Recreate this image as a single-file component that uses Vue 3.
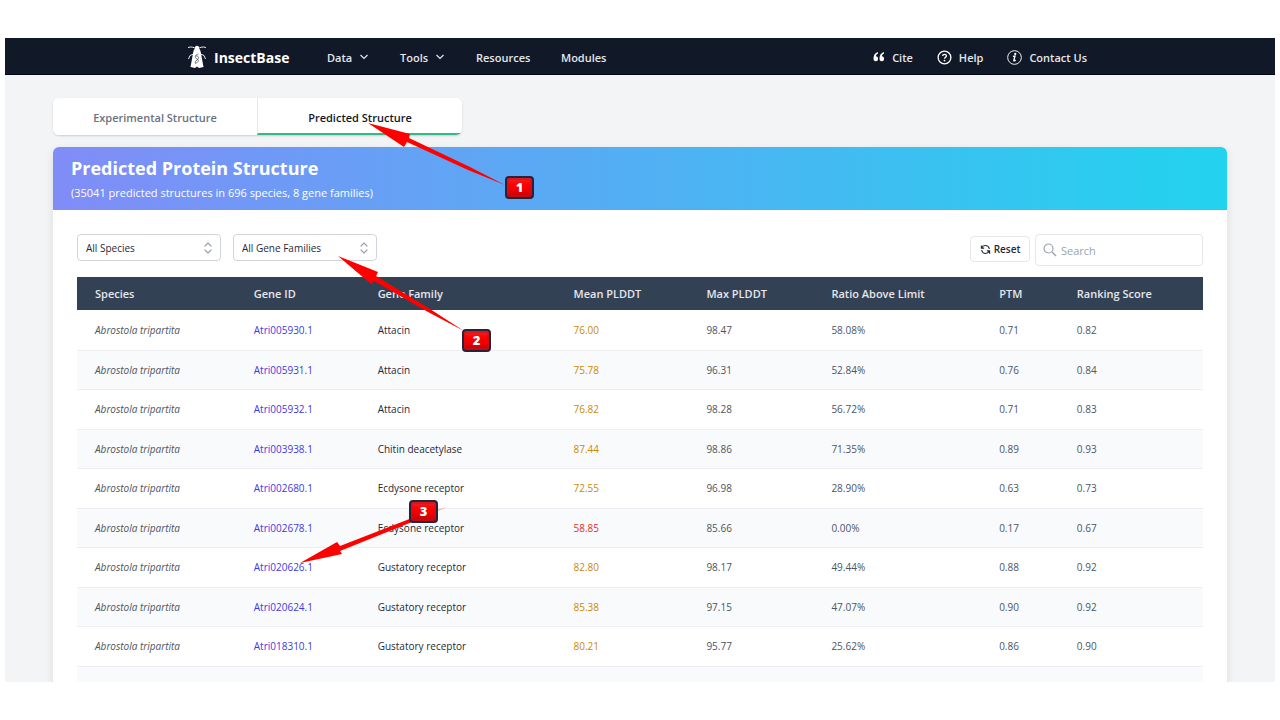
<script setup>
import { ref } from 'vue'

const species = ref('All Species')
const family = ref('All Gene Families')
const query = ref('')

const columns = ['Species', 'Gene ID', 'Gene Family', 'Mean PLDDT', 'Max PLDDT', 'Ratio Above Limit', 'PTM', 'Ranking Score']

const rows = [
  ['Atri005930.1', 'Attacin', '76.00', '98.47', '58.08%', '0.71', '0.82'],
  ['Atri005931.1', 'Attacin', '75.78', '96.31', '52.84%', '0.76', '0.84'],
  ['Atri005932.1', 'Attacin', '76.82', '98.28', '56.72%', '0.71', '0.83'],
  ['Atri003938.1', 'Chitin deacetylase', '87.44', '98.86', '71.35%', '0.89', '0.93'],
  ['Atri002680.1', 'Ecdysone receptor', '72.55', '96.98', '28.90%', '0.63', '0.73'],
  ['Atri002678.1', 'Ecdysone receptor', '58.85', '85.66', '0.00%', '0.17', '0.67'],
  ['Atri020626.1', 'Gustatory receptor', '82.80', '98.17', '49.44%', '0.88', '0.92'],
  ['Atri020624.1', 'Gustatory receptor', '85.38', '97.15', '47.07%', '0.90', '0.92'],
  ['Atri018310.1', 'Gustatory receptor', '80.21', '95.77', '25.62%', '0.86', '0.90'],
]
</script>

<template>
  <div class="stage">
    <div class="frame">
      <header class="topbar">
        <nav class="nav">
          <a class="brand" href="#">
            <svg class="moth" viewBox="0 0 20 26" aria-hidden="true">
              <path d="M9 5 C7 3 4 2.500 1 3.500 M11 5 C13 3 16 2.500 19 3.500" fill="none" stroke="#fff" stroke-width="0.900" />
              <path d="M6.500 10 L3 11.500 L1.500 15 M13.500 10 L17 11.500 L18.500 15" fill="none" stroke="#fff" stroke-width="0.900" />
              <circle cx="10" cy="4" r="2.200" fill="#fff" />
              <path d="M10 4 C12.500 4 13.700 6 14 9.500 L16.500 23 L12 24 L10 22.500 L8 24 L3.500 23 L6 9.500 C6.300 6 7.500 4 10 4Z" fill="#fff" />
              <path d="M11.500 10 C7.500 11 7.500 14 10 15 S11.500 18 8.500 19.500 M8.500 12 C12.500 11.500 12 14.500 10 16 S8 18 8.500 19.500" fill="none" stroke="#4b5563" stroke-width="0.800" />
            </svg>
            <span>InsectBase</span>
          </a>
          <button class="navitem menu" type="button">Data
            <svg viewBox="0 0 10 10" aria-hidden="true"><path d="M1.500 3 L5 6.500 L8.500 3" fill="none" stroke="currentColor" stroke-width="1.200" /></svg>
          </button>
          <button class="navitem menu tools" type="button">Tools
            <svg viewBox="0 0 10 10" aria-hidden="true"><path d="M1.500 3 L5 6.500 L8.500 3" fill="none" stroke="currentColor" stroke-width="1.200" /></svg>
          </button>
          <a class="navitem resources" href="#">Resources</a>
          <a class="navitem modules" href="#">Modules</a>
          <div class="navright">
            <a class="navitem" href="#">
              <svg class="quote" viewBox="0 0 12 10" aria-hidden="true">
                <path d="M5 0 C2 1 0.500 3 0.500 6.500 A2.300 2.500 0 1 0 3 4.300 C3 2.800 3.800 2 5 1.500Z M11 0 C8 1 6.500 3 6.500 6.500 A2.300 2.500 0 1 0 9 4.300 C9 2.800 9.800 2 11 1.500Z" fill="#fff" />
              </svg>
              Cite
            </a>
            <a class="navitem" href="#">
              <svg class="round" viewBox="0 0 16 16" aria-hidden="true">
                <circle cx="8" cy="8" r="6.800" fill="none" stroke="#fff" stroke-width="1.400" />
                <path d="M6 6.500 C6 4 10 4 10 6.400 C10 7.800 8 7.800 8 9.300" fill="none" stroke="#fff" stroke-width="1.400" />
                <circle cx="8" cy="11.300" r="1" fill="#fff" />
              </svg>
              Help
            </a>
            <a class="navitem" href="#">
              <svg class="round" viewBox="0 0 16 16" aria-hidden="true">
                <circle cx="8" cy="8" r="7.300" fill="none" stroke="#fff" stroke-width="1" />
                <path d="M6.300 6.800 L8.500 6.500 L7.300 11 C7.200 11.900 8.200 11.700 9.200 10.700" fill="none" stroke="#fff" stroke-width="1.500" />
                <circle cx="8.800" cy="4.200" r="1.200" fill="#fff" />
              </svg>
              Contact Us
            </a>
          </div>
        </nav>
      </header>

      <main class="content">
        <div class="tabs">
          <button class="tab" type="button">Experimental Structure</button>
          <button class="tab active" type="button">Predicted Structure</button>
        </div>

        <section class="panel">
          <div class="banner">
            <h1>Predicted Protein Structure</h1>
            <p>(35041 predicted structures in 696 species, 8 gene families)</p>
          </div>

          <div class="body">
            <div class="toolbar">
              <div class="picker">
                <select v-model="species" aria-label="Species"><option>All Species</option></select>
                <svg viewBox="0 0 8 12" aria-hidden="true"><path d="M1 4 L4 1 L7 4 M1 8 L4 11 L7 8" fill="none" stroke="#9ca3af" stroke-width="1.200" stroke-linecap="round" stroke-linejoin="round" /></svg>
              </div>
              <div class="picker">
                <select v-model="family" aria-label="Gene family"><option>All Gene Families</option></select>
                <svg viewBox="0 0 8 12" aria-hidden="true"><path d="M1 4 L4 1 L7 4 M1 8 L4 11 L7 8" fill="none" stroke="#9ca3af" stroke-width="1.200" stroke-linecap="round" stroke-linejoin="round" /></svg>
              </div>
              <button class="reset" type="button">
                <svg viewBox="0 0 12 12" aria-hidden="true">
                  <path d="M1.500 1.500 V4.500 H4.500 M1.700 4.300 C3 1 8.500 0.500 10 4.500 V5.500 M10.500 10.500 V7.500 H7.500 M10.300 7.700 C9 11 3.500 11.500 2 7.500 V6.500" fill="none" stroke="#1f2937" stroke-width="1.200" />
                </svg>
                Reset
              </button>
              <div class="search">
                <svg viewBox="0 0 14 14" aria-hidden="true"><circle cx="5.500" cy="5.500" r="4.500" fill="none" stroke="#9ca3af" stroke-width="1.200" /><path d="M9 9 L13 13" stroke="#9ca3af" stroke-width="1.400" /></svg>
                <input v-model="query" type="text" placeholder="Search" aria-label="Search" />
              </div>
            </div>

            <table>
              <colgroup>
                <col class="c-species" /><col class="c-gene" /><col class="c-family" /><col class="c-mean" />
                <col class="c-max" /><col class="c-ratio" /><col class="c-ptm" /><col class="c-score" />
              </colgroup>
              <thead>
                <tr><th v-for="c in columns" :key="c" scope="col">{{ c }}</th></tr>
              </thead>
              <tbody>
                <tr v-for="r in rows" :key="r[0]">
                  <td class="species">Abrostola tripartita</td>
                  <td><a class="gene" href="#">{{ r[0] }}</a></td>
                  <td class="family">{{ r[1] }}</td>
                  <td :class="Number(r[2]) < 70 ? 'low' : 'mid'">{{ r[2] }}</td>
                  <td>{{ r[3] }}</td>
                  <td>{{ r[4] }}</td>
                  <td>{{ r[5] }}</td>
                  <td>{{ r[6] }}</td>
                </tr>
                <tr><td colspan="8"></td></tr>
              </tbody>
            </table>
          </div>
        </section>
      </main>

      <svg class="arrows" viewBox="0 0 560 580" aria-hidden="true">
        <g fill="#ff0000">
          <path d="M368 123 L410 134 L409 138 L470 167 L505 185 L468 170 L407 142 L404 147Z" />
          <path d="M338 256 L378 272 L376 276 L430 309 L464 331 L428 312 L374 281 L371 284Z" />
          <path d="M300 563 L337 542 L340 546 L412 518 L412 522 L340 551 L342 554Z" />
          <path d="M436 512 L447 507 L436 510Z" fill="#f9b59a" />
        </g>
      </svg>
      <span class="badge one">1</span>
      <span class="badge two">2</span>
      <span class="badge three">3</span>
    </div>
  </div>
</template>

<style>
body {
  background: #fff;
}
</style>

<style scoped>
.stage {
  box-sizing: border-box;
  height: 100vh;
  padding: 38px 5px;
  overflow: hidden;
  font-family: "Open Sans", "Noto Sans", sans-serif;
  font-size: 10px;
  color: #1f2937;
}
.stage *,
.stage *::before {
  box-sizing: border-box;
}
.frame {
  position: relative;
  height: 100%;
}
.frame,
.content {
  display: flex;
  flex-direction: column;
}
button,
select,
input {
  font: inherit;
  color: inherit;
}
a {
  color: inherit;
  text-decoration: none;
}
.topbar {
  flex: none;
  background: #111827;
  border-bottom: 1px solid #030712;
}
.nav {
  display: flex;
  align-items: center;
  max-width: 906px;
  height: 36px;
  margin: 0 auto;
  padding: 2px 6px 0 0;
}
.brand {
  display: flex;
  align-items: center;
  gap: 7px;
  width: 140px;
  font-size: 14px;
  font-weight: 700;
  color: #fff;
}
.moth {
  width: 20px;
  height: 26px;
}
.navitem {
  display: flex;
  align-items: center;
  gap: 7px;
  padding: 0;
  border: 0;
  background: none;
  font-size: 11px;
  font-weight: 600;
  color: #e5e7eb;
}
.menu {
  width: 73px;
}
.menu svg {
  width: 10px;
  height: 10px;
}
.tools {
  width: 76px;
}
.resources {
  width: 85px;
}
.navright {
  display: flex;
  gap: 24px;
  margin-left: auto;
}
.navitem .quote {
  width: 12px;
  height: 10px;
}
.navitem .round {
  width: 15px;
  height: 15px;
}
.content {
  flex: 1;
  min-height: 0;
  overflow: hidden;
  padding: 23px 48px 0;
  background: #f3f4f6;
}
.tabs {
  display: flex;
  flex: none;
  width: 409px;
  height: 37px;
  margin-bottom: 12px;
  border-radius: 6px;
  background: #fff;
  box-shadow: 0 1px 2px #0000002a;
  overflow: hidden;
}
.tab {
  flex: 1;
  padding: 3px 0 0;
  border: 0;
  border-bottom: 2px solid transparent;
  background: #fff;
  font-size: 11px;
  font-weight: 600;
  color: #6b7280;
}
.tab.active {
  border-left: 1px solid #e5e7eb;
  border-bottom-color: #34b88a;
  color: #111827;
}
.panel {
  flex: none;
  border-radius: 6px 6px 0 0;
  background: #fff;
  box-shadow: 0 3px 10px #00000018;
}
.banner {
  height: 63px;
  padding: 8px 18px;
  border-radius: 6px 6px 0 0;
  background: linear-gradient(to right, #818cf8, #22d3ee);
  color: #fff;
}
h1 {
  margin: 0;
  font-size: 18px;
  line-height: 26px;
  font-weight: 700;
}
.banner p {
  margin: 4px 0 0;
  font-size: 11px;
  line-height: 16px;
}
.body {
  padding: 24px 24px 0;
}
.toolbar {
  display: flex;
  gap: 12px;
  height: 43px;
}
.picker {
  position: relative;
  width: 144px;
  height: 27px;
}
.picker select {
  width: 100%;
  height: 100%;
  padding: 0 8px;
  border: 1px solid #d1d5db;
  border-radius: 4px;
  background: #fff;
  appearance: none;
}
.picker svg {
  position: absolute;
  top: 8px;
  right: 9px;
  width: 8px;
  height: 12px;
  pointer-events: none;
}
.reset {
  display: flex;
  align-items: center;
  justify-content: center;
  gap: 3px;
  width: 60px;
  height: 26px;
  margin: 2px -7px 0 auto;
  padding: 0;
  border: 1px solid #e5e7eb;
  border-radius: 4px;
  background: #fff;
  font-weight: 600;
}
.reset svg {
  width: 11px;
  height: 11px;
}
.search {
  display: flex;
  align-items: center;
  gap: 4px;
  width: 168px;
  height: 32px;
  padding: 0 7px;
  border: 1px solid #e5e7eb;
  border-radius: 4px;
}
.search svg {
  flex: none;
  width: 14px;
  height: 14px;
}
.search input {
  flex: 1;
  min-width: 0;
  padding: 0;
  border: 0;
  outline: 0;
  background: none;
  font-size: 11px;
}
.search input::placeholder {
  color: #9ca3af;
}
table {
  width: 100%;
  table-layout: fixed;
  border-collapse: collapse;
}
.c-species { width: 14.1%; }
.c-gene { width: 11%; }
.c-family { width: 17.4%; }
.c-mean { width: 11.8%; }
.c-max { width: 11.1%; }
.c-ratio { width: 14.9%; }
.c-ptm { width: 6.9%; }
.c-score { width: 12.8%; }
th {
  height: 33px;
  padding: 0 0 0 18px;
  background: #334155;
  font-size: 11px;
  font-weight: 600;
  text-align: left;
  white-space: nowrap;
  color: #e5e7eb;
}
td {
  height: 40px;
  padding: 0 0 0 18px;
  border-bottom: 1px solid #eceef1;
  color: #4b5563;
  white-space: nowrap;
}
tbody tr:nth-child(even) {
  background: #f9fafb;
}
tbody tr:nth-child(even) td {
  height: 39px;
}
.species {
  font-style: italic;
}
.gene {
  font-weight: 500;
  color: #4338e0;
}
td.family {
  color: #1f2937;
}
td.mid {
  color: #ca8a04;
}
td.low {
  color: #ef2b2b;
}
.arrows {
  position: absolute;
  top: -38px;
  left: -5px;
  width: 560px;
  height: 580px;
  pointer-events: none;
}
.badge {
  position: absolute;
  width: 29px;
  height: 23px;
  border: 2px solid #29233a;
  border-radius: 4px;
  background: linear-gradient(#e8262b, #ff0000 35%, #ee0004 65%, #b5060c);
  box-shadow: inset 0 0 0 2px #c8101a88;
  font-size: 13px;
  line-height: 19px;
  font-weight: 800;
  text-align: center;
  color: #fff;
}
.one {
  left: 500px;
  top: 138px;
}
.two {
  left: 457px;
  top: 291px;
}
.three {
  left: 404px;
  top: 462px;
}
</style>
